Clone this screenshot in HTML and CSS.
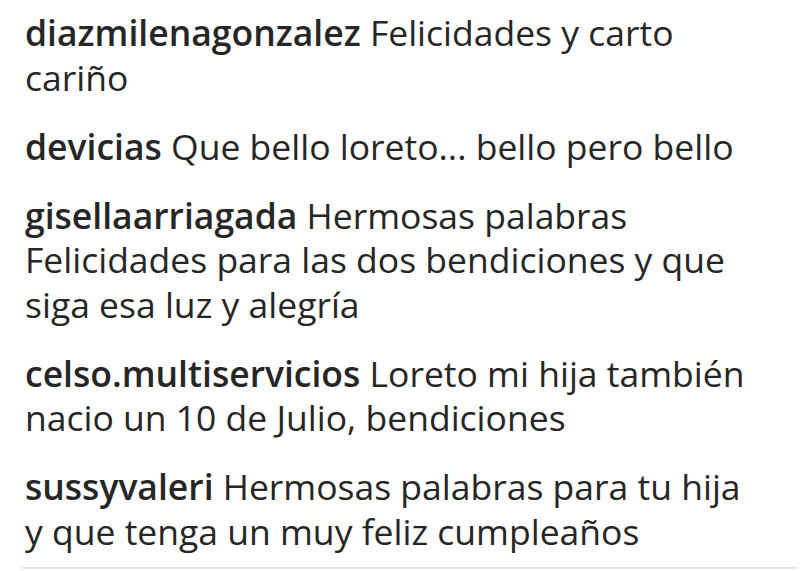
FILE: index.html
```html
<!DOCTYPE html>
<html lang="es">
<head>
    <meta charset="UTF-8">
    <meta name="viewport" content="width=device-width, initial-scale=1.0">
    <title>Comentarios</title>
    <link rel="stylesheet" href="styles.css">
</head>
<body>
    <ul class="comments">
        <li class="comment"><a class="user">diazmilenagonzalez</a> Felicidades y carto cariño</li>
        <li class="comment"><a class="user">devicias</a> Que bello loreto... bello pero bello</li>
        <li class="comment"><a class="user">gisellaarriagada</a> Hermosas palabras Felicidades para las dos bendiciones y que siga esa luz y alegría</li>
        <li class="comment"><a class="user">celso.multiservicios</a> Loreto mi hija también nacio un 10 de Julio, bendiciones</li>
        <li class="comment"><a class="user">sussyvaleri</a> Hermosas palabras para tu hija y que tenga un muy feliz cumpleaños</li>
    </ul>
</body>
</html>
```

FILE: styles.css
```css
body {
    margin: 0;
    background-color: #ffffff;
    font-family: 'Open Sans', sans-serif;
    color: #262626;
}

.comments {
    list-style: none;
    margin: 0 0 0 22px;
    padding: 10px 47px 0 3px;
    width: 726px;
    border-bottom: 2px solid #e8e8e8;
}

.comment {
    font-size: 35.5px;
    line-height: 44.5px;
    margin-bottom: 24.5px;
}

.comment:last-child {
    margin-bottom: 14px;
}

.user {
    font-weight: 600;
}
```
